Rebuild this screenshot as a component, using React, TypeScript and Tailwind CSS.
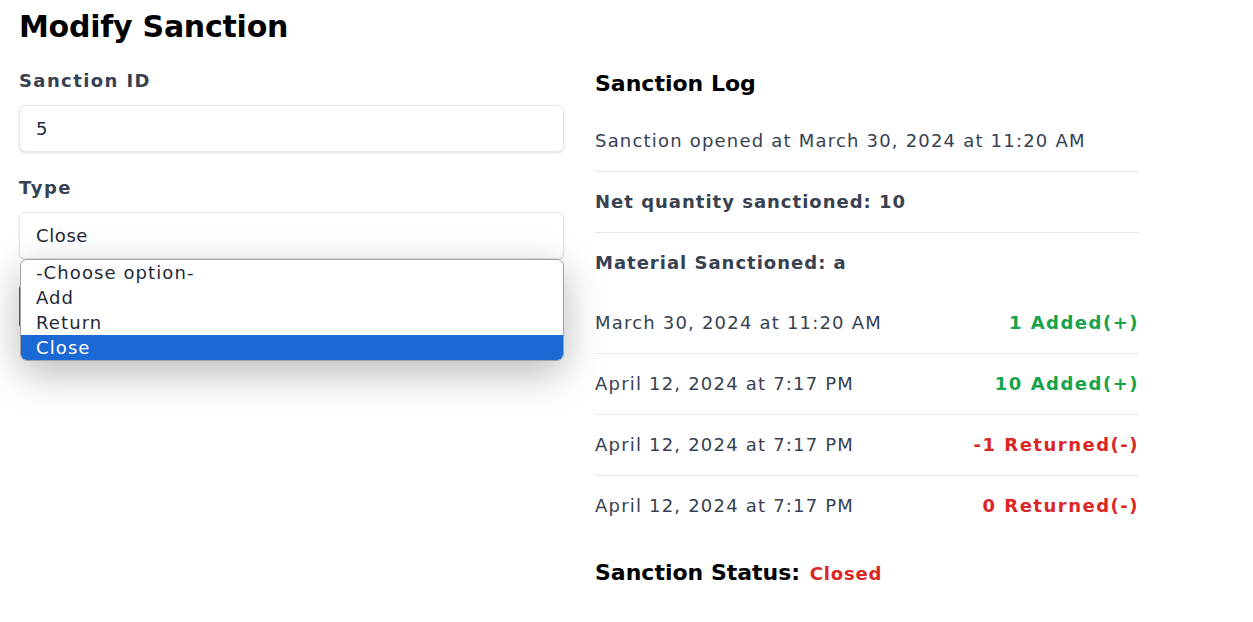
const font = { fontFamily: '"DejaVu Sans", Verdana, sans-serif' };

const logRows = [
  { date: 'March 30, 2024 at 11:20 AM', text: '1 Added(+)', added: true },
  { date: 'April 12, 2024 at 7:17 PM', text: '10 Added(+)', added: true },
  { date: 'April 12, 2024 at 7:17 PM', text: '-1 Returned(-)', added: false },
  { date: 'April 12, 2024 at 7:17 PM', text: '0 Returned(-)', added: false },
];

const options = ['-Choose option-', 'Add', 'Return', 'Close'];

export default function App() {
  return (
    <div className="min-h-screen bg-white pl-[19px]" style={font}>
      <h1 className="pt-[9px] text-[30px] font-bold leading-[36px] tracking-[-0.25px] text-black">Modify Sanction</h1>

      <div className="flex gap-[31px]">
        {/* form */}
        <div className="w-[545px] pt-[22px]">
          <label className="block text-[18px] font-bold leading-[27px] tracking-[1.4px] text-[#374151]">Sanction ID</label>
          <div className="mt-[11px] flex h-[47px] items-center rounded-md border border-[#e5e7eb] bg-white px-[16px] text-[18px] tracking-[0.6px] text-[#1f2937] shadow-sm">
            5
          </div>

          <label className="mt-[22px] block text-[18px] font-bold leading-[27px] tracking-[1.5px] text-[#374151]">Type</label>
          <div className="relative mt-[11px]">
            <div className="flex h-[47px] items-center rounded-md border border-[#e5e7eb] bg-white px-[16px] text-[18px] tracking-[0.6px] text-[#1f2937] shadow-sm">
              Close
            </div>
            <button className="mt-[24px] h-[47px] w-[140px] rounded-md bg-[#2563eb]"></button>

            {/* open native-like listbox */}
            <div className="absolute left-[1px] right-0 top-[47px] overflow-hidden rounded-[7px] border border-[#a3a3a3] bg-white shadow-[0_12px_40px_rgba(0,0,0,0.28)]">
              {options.map((o) => (
                <div
                  key={o}
                  className={
                    o === 'Close'
                      ? 'h-[25px] bg-[#1a69d4] px-[15px] text-[18px] leading-[25px] tracking-[1.1px] text-white'
                      : 'h-[25px] px-[15px] text-[18px] leading-[25px] tracking-[1.1px] text-[#1f2937]'
                  }
                >
                  {o}
                </div>
              ))}
            </div>
          </div>
        </div>

        {/* log */}
        <div className="w-[544px] pt-[25px]">
          <h2 className="text-[22px] font-bold leading-[28px] text-black">Sanction Log</h2>
          <div className="mt-[13px]">
            <div className="border-b border-[#e5e7eb] py-[17px] text-[18px] leading-[26px] tracking-[1.2px] text-[#374151]">
              Sanction opened at March 30, 2024 at 11:20 AM
            </div>
            <div className="border-b border-[#e5e7eb] py-[17px] text-[18px] font-bold leading-[26px] tracking-[1px] text-[#374151]">
              Net quantity sanctioned: 10
            </div>
            <div className="py-[17px] text-[18px] font-bold leading-[26px] tracking-[1px] text-[#374151]">
              Material Sanctioned: a
            </div>
            {logRows.map((r, i) => (
              <div
                key={i}
                className={
                  i < logRows.length - 1
                    ? 'flex justify-between border-b border-[#e5e7eb] py-[17px] text-[18px] leading-[26px]'
                    : 'flex justify-between py-[17px] text-[18px] leading-[26px]'
                }
              >
                <span className="tracking-[1.2px] text-[#374151]">{r.date}</span>
                <span className={r.added ? 'font-bold tracking-[1.5px] text-[#16a34a]' : 'font-bold tracking-[1.5px] text-[#dc2626]'}>{r.text}</span>
              </div>
            ))}
          </div>
          <div className="mt-[23px] text-[22px] font-bold leading-[28px] text-black">
            Sanction Status: <span className="ml-[2px] text-[18px] tracking-[0.8px] text-[#dc2626]">Closed</span>
          </div>
        </div>
      </div>
    </div>
  );
}
